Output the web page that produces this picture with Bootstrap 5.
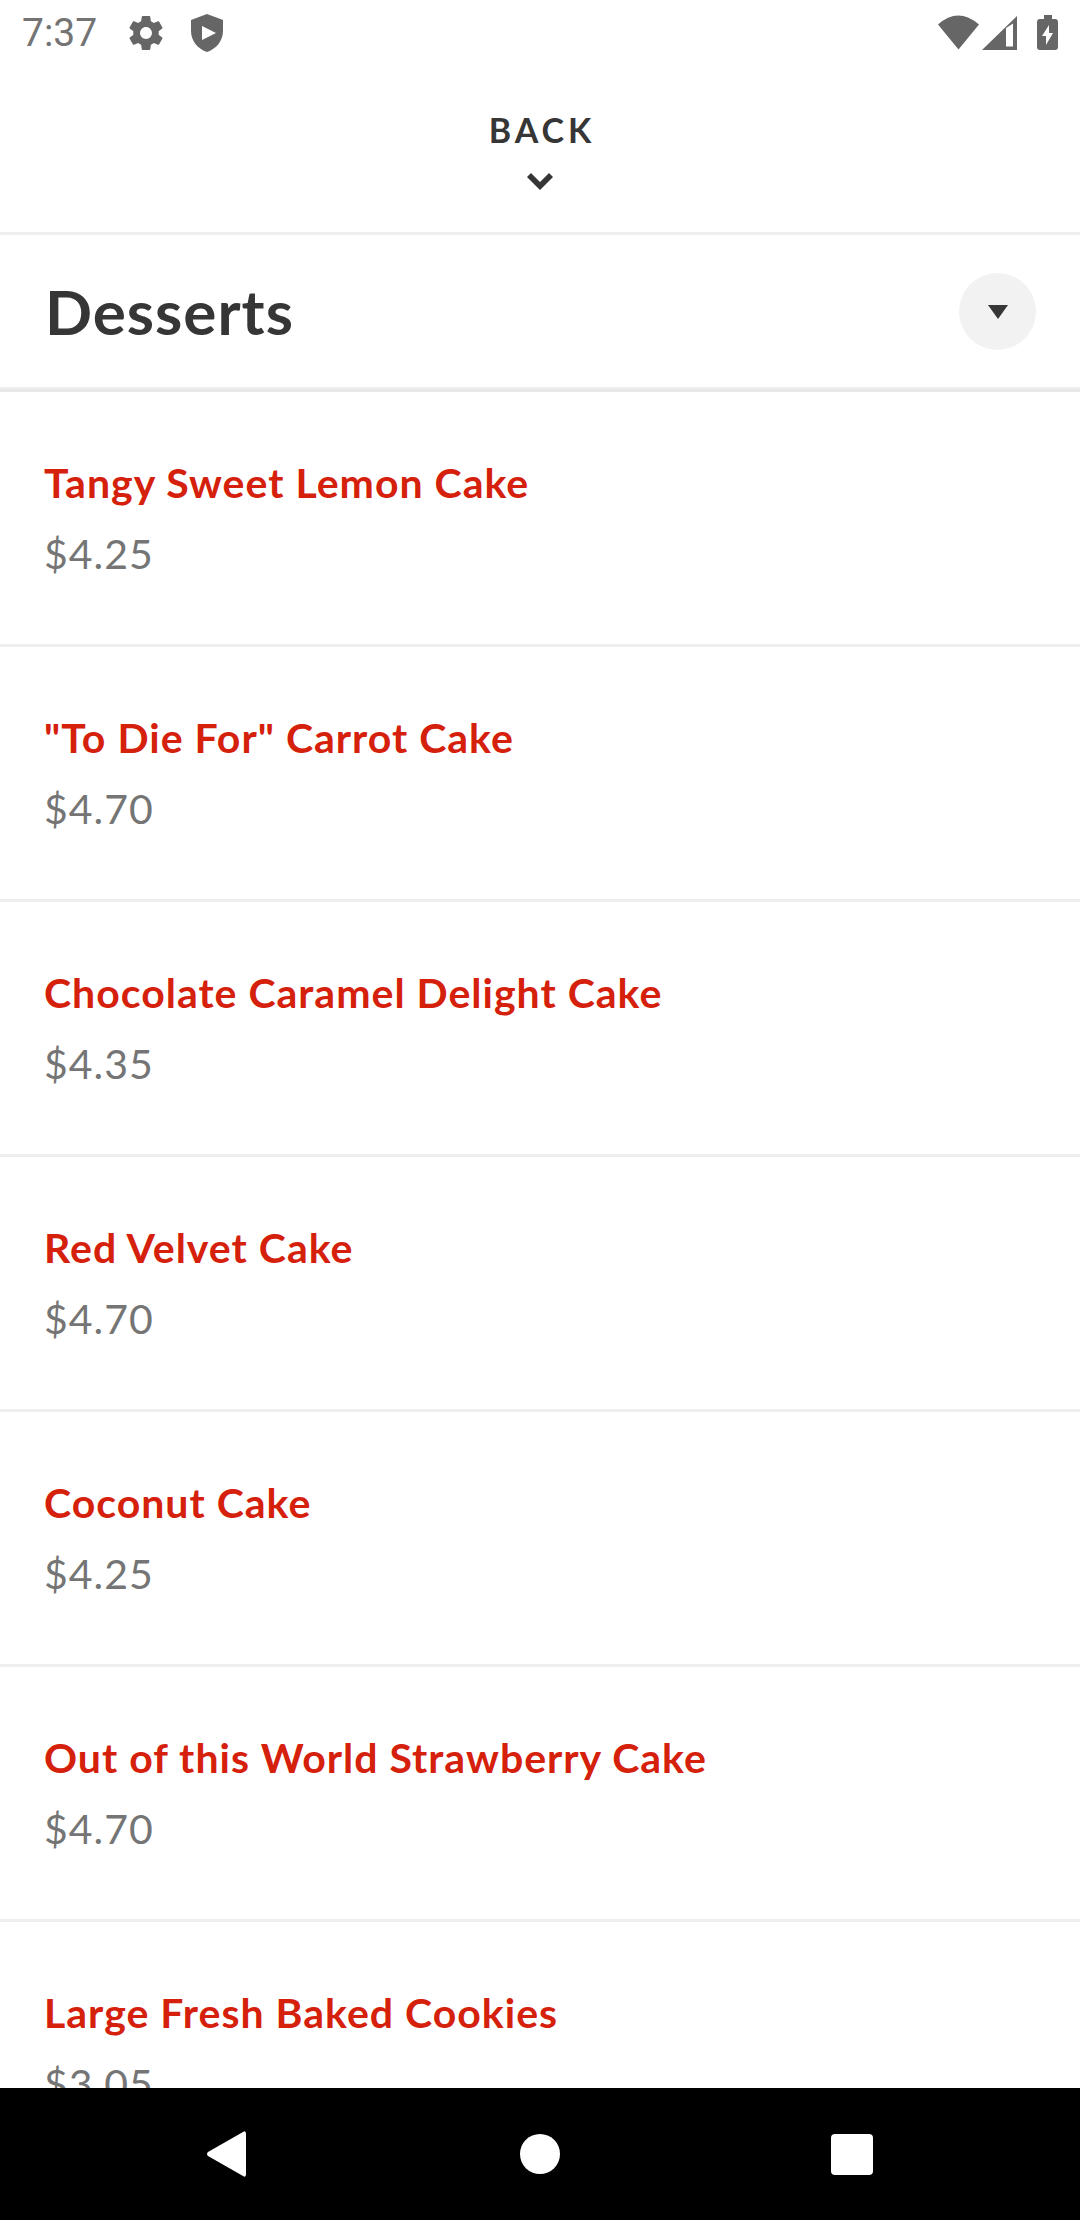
<!DOCTYPE html>
<html lang="en">
<head>
<meta charset="utf-8">
<meta name="viewport" content="width=device-width, initial-scale=1">
<title>Desserts</title>
<link rel="stylesheet" href="https://cdn.jsdelivr.net/npm/bootstrap@5.3.0/dist/css/bootstrap.min.css">
<style>
body { font-family: Lato, "Open Sans", sans-serif; color: #363636; background: #fff; }
svg { display: block; fill: currentColor; }
.status-bar { height: 66px; padding: 0 20px 0 22px; color: #666; font-family: Roboto, sans-serif; font-size: 39px; line-height: 68px; }
.clock { font-weight: 400; color: #747474; }
.settings-icon { margin-left: 32px; }
.back-bar { height: 169px; padding-top: 42px; border-bottom: 3px solid #eee; }
.back-btn { font-size: 34px; line-height: 44px; font-weight: 700; letter-spacing: 4px; color: #363636; }
.back-btn span { margin-right: -4px; }
.chevron { margin: 20px auto 0; }
.section-bar { height: 157px; padding: 0 44px 2px 45px; border-bottom: 3px solid #e8e8e8; box-shadow: inset 0 -2px #eee; }
.section-bar h1 { font-size: 62px; line-height: 76px; font-weight: 700; letter-spacing: 1px; }
.picker { width: 77px; height: 77px; background: #f2f2f2; color: #363636; }
.menu-scroll { min-height: 0; scrollbar-width: none; }
.menu-scroll::-webkit-scrollbar { display: none; }
.dish { height: 255px; padding: 65px 44px 0; border-bottom: 3px solid #eee; letter-spacing: 1px; font-size: 41px; line-height: 52px; }
.dish-name { color: #d5200c; font-weight: 700; }
.dish-price { color: #757575; margin-top: 19px; }
.sys-nav { height: 132px; padding: 0 70px; }
</style>
<script src="https://cdn.jsdelivr.net/npm/bootstrap@5.3.0/dist/js/bootstrap.bundle.min.js"></script>
</head>
<body>
<div class="vh-100 d-flex flex-column overflow-hidden">
  <div class="status-bar d-flex align-items-center flex-shrink-0">
    <span class="clock">7:37</span>
    <svg class="settings-icon" width="34" height="36" viewBox="2 2 20 20" aria-label="Settings"><path d="M19.430 12.980c.040-.320.070-.640.070-.980s-.030-.660-.070-.980l2.110-1.650c.190-.150.240-.420.120-.640l-2-3.460c-.120-.220-.390-.300-.610-.220l-2.490 1c-.520-.400-1.080-.730-1.690-.980l-.380-2.650C14.460 2.180 14.250 2 14 2h-4c-.250 0-.460.180-.490.420l-.380 2.650c-.610.250-1.170.590-1.690.980l-2.490-1c-.230-.090-.490 0-.610.220l-2 3.460c-.130.220-.070.490.120.640l2.110 1.650c-.040.320-.070.650-.070.980s.030.660.070.980l-2.110 1.650c-.190.150-.240.420-.120.640l2 3.460c.120.220.390.300.610.220l2.490-1c.520.400 1.080.730 1.690.980l.380 2.650c.030.240.240.420.490.420h4c.250 0 .460-.180.490-.420l.380-2.650c.610-.250 1.170-.590 1.690-.980l2.490 1c.230.090.490 0 .610-.220l2-3.460c.120-.220.070-.490-.120-.640l-2.110-1.650zM12 15.500c-1.930 0-3.500-1.570-3.500-3.500s1.570-3.500 3.500-3.500 3.500 1.570 3.500 3.500-1.570 3.500-3.500 3.500z"/></svg>
    <svg class="ms-4" width="40" height="38" viewBox="-4 0 40 38" aria-label="Play Protect"><path fill-rule="evenodd" d="M16 0L32 6V17C32 27 25 35 16 38C7 35 0 27 0 17V6ZM11 12V26L25 19Z"/></svg>
    <svg class="ms-auto" width="84" height="36" viewBox="0 0 84 36" aria-label="Wi-Fi and signal"><path d="M2 9.500Q22 -8.500 43 9.500L22.500 34.500ZM46 35L81 1V35ZM70 13V31.500H77V8.500Z" fill-rule="evenodd"/></svg>
    <svg class="ms-3" width="24" height="36" viewBox="0 0 24 36" aria-label="Charging"><path fill-rule="evenodd" d="M8 0H16V4H19Q22 4 22 7V32Q22 35 19 35H4Q1 35 1 32V7Q1 4 4 4H8ZM13 10L6 21H10V30L17 18H13Z"/></svg>
  </div>

  <header class="back-bar text-center flex-shrink-0">
    <button type="button" class="back-btn btn p-0 border-0 rounded-0">
      <span>BACK</span>
      <svg class="chevron" width="28" height="18" viewBox="0 0 28 18" aria-hidden="true"><path d="M5 1L14 10L23 1L27 5L14 18L1 5Z"/></svg>
    </button>
  </header>

  <div class="section-bar d-flex align-items-center justify-content-between flex-shrink-0">
    <h1 class="m-0">Desserts</h1>
    <button type="button" class="picker btn rounded-circle border-0 p-0 d-flex align-items-center justify-content-center" aria-label="Choose category">
      <svg width="20" height="16" viewBox="0 0 20 16" aria-hidden="true"><path d="M0 2H20L10 16Z"/></svg>
    </button>
  </div>

  <main class="menu-scroll flex-grow-1 overflow-auto">
    <ul class="list-unstyled m-0">
      <li class="dish"><a href="#" class="dish-name d-block text-decoration-none">Tangy Sweet Lemon Cake</a><div class="dish-price">$4.25</div></li>
      <li class="dish"><a href="#" class="dish-name d-block text-decoration-none">"To Die For" Carrot Cake</a><div class="dish-price">$4.70</div></li>
      <li class="dish"><a href="#" class="dish-name d-block text-decoration-none">Chocolate Caramel Delight Cake</a><div class="dish-price">$4.35</div></li>
      <li class="dish"><a href="#" class="dish-name d-block text-decoration-none">Red Velvet Cake</a><div class="dish-price">$4.70</div></li>
      <li class="dish"><a href="#" class="dish-name d-block text-decoration-none">Coconut Cake</a><div class="dish-price">$4.25</div></li>
      <li class="dish"><a href="#" class="dish-name d-block text-decoration-none">Out of this World Strawberry Cake</a><div class="dish-price">$4.70</div></li>
      <li class="dish"><a href="#" class="dish-name d-block text-decoration-none">Large Fresh Baked Cookies</a><div class="dish-price">$3.05</div></li>
    </ul>
  </main>

  <nav class="sys-nav d-flex align-items-center bg-black flex-shrink-0" aria-label="System">
    <button type="button" class="btn border-0 text-white p-0 flex-fill" aria-label="Back"><svg class="mx-auto" width="44" height="46" viewBox="0 0 44 46"><path d="M38 1Q41 -1 41 3V43Q41 47 38 45L3 25Q1 23 3 21Z"/></svg></button>
    <button type="button" class="btn border-0 text-white p-0 flex-fill" aria-label="Home"><svg class="mx-auto" width="44" height="46" viewBox="0 0 44 46"><circle cx="22" cy="23" r="20"/></svg></button>
    <button type="button" class="btn border-0 text-white p-0 flex-fill" aria-label="Recent apps"><svg class="mx-auto" width="44" height="46" viewBox="0 0 44 46"><rect x="0" y="3" width="42" height="41" rx="4"/></svg></button>
  </nav>
</div>
</body>
</html>
